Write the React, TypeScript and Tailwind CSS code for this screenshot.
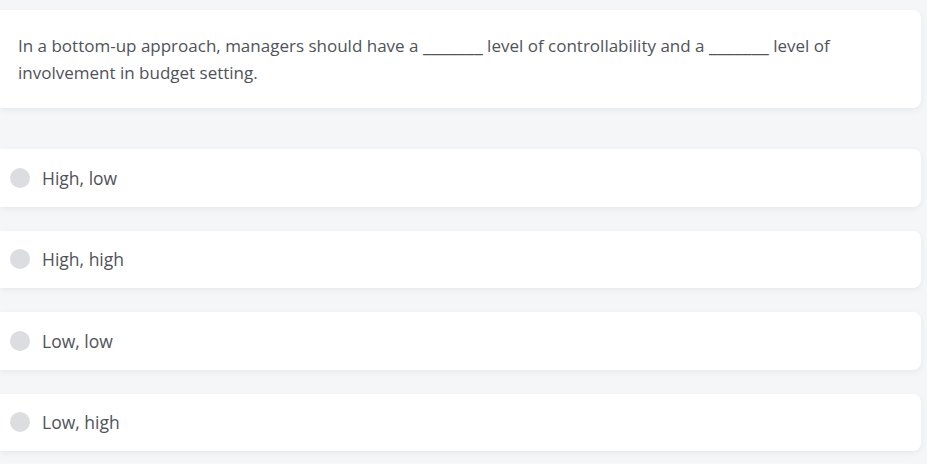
import React from "react";

const options = ["High, low", "High, high", "Low, low", "Low, high"];

function Blank() {
  return <span className="text-[19.5px] leading-none">_______</span>;
}

export default function App() {
  return (
    <div
      className="w-[927px] h-[464px] overflow-hidden bg-[#f5f6f8] pt-[10px] pr-[6px] text-[#505359]"
      style={{ fontFamily: '"Open Sans", "Noto Sans", sans-serif' }}
    >
      <div className="bg-white rounded-r-lg shadow-[0_2px_6px_rgba(0,0,0,0.06)] pl-[18px] pr-[40px] py-[22px] text-[17px] leading-[27px]">
        In a bottom-up approach, managers should have a <Blank /> level of controllability and a <Blank /> level of involvement in budget setting.
      </div>
      <div className="mt-[41px] flex flex-col gap-[24px]">
        {options.map((o) => (
          <div
            key={o}
            className="h-[57.5px] bg-white rounded-r-lg shadow-[0_2px_6px_rgba(0,0,0,0.06)] flex items-center pl-[10px] text-[17.5px]"
          >
            <span className="w-[20px] h-[20px] rounded-full bg-[#dcdde0] shrink-0" />
            <span className="ml-[12px]">{o}</span>
          </div>
        ))}
      </div>
    </div>
  );
}
